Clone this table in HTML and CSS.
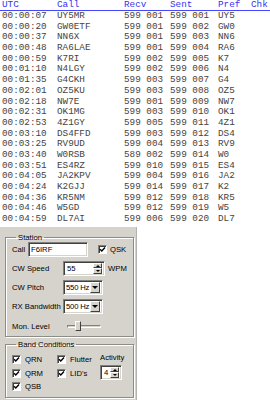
FILE: index.html
```html
<!DOCTYPE html>
<html>
<head>
<meta charset="utf-8">
<link rel="stylesheet" href="styles.css">
</head>
<body>
<div class="log">
  <div class="row head"><span>UTC</span><span>Call</span><span>Recv</span><span>Sent</span><span>Pref</span><span>Chk</span></div>
  <div class="row"><span>00:00:07</span><span>UY5MR</span><span>599 001</span><span>599 001</span><span>UY5</span><span></span></div>
  <div class="row"><span>00:00:20</span><span>GW0ETF</span><span>599 001</span><span>599 002</span><span>GW0</span><span></span></div>
  <div class="row"><span>00:00:37</span><span>NN6X</span><span>599 001</span><span>599 003</span><span>NN6</span><span></span></div>
  <div class="row"><span>00:00:48</span><span>RA6LAE</span><span>599 001</span><span>599 004</span><span>RA6</span><span></span></div>
  <div class="row"><span>00:00:59</span><span>K7RI</span><span>599 002</span><span>599 005</span><span>K7</span><span></span></div>
  <div class="row"><span>00:01:10</span><span>N4LGY</span><span>599 002</span><span>599 006</span><span>N4</span><span></span></div>
  <div class="row"><span>00:01:35</span><span>G4CKH</span><span>599 003</span><span>599 007</span><span>G4</span><span></span></div>
  <div class="row"><span>00:02:01</span><span>OZ5KU</span><span>599 003</span><span>599 008</span><span>OZ5</span><span></span></div>
  <div class="row"><span>00:02:18</span><span>NW7E</span><span>599 001</span><span>599 009</span><span>NW7</span><span></span></div>
  <div class="row"><span>00:02:31</span><span>OK1MG</span><span>599 003</span><span>599 010</span><span>OK1</span><span></span></div>
  <div class="row"><span>00:02:53</span><span>4Z1GY</span><span>599 005</span><span>599 011</span><span>4Z1</span><span></span></div>
  <div class="row"><span>00:03:10</span><span>DS4FFD</span><span>599 003</span><span>599 012</span><span>DS4</span><span></span></div>
  <div class="row"><span>00:03:25</span><span>RV9UD</span><span>599 004</span><span>599 013</span><span>RV9</span><span></span></div>
  <div class="row"><span>00:03:40</span><span>W0RSB</span><span>589 002</span><span>599 014</span><span>W0</span><span></span></div>
  <div class="row"><span>00:03:51</span><span>ES4RZ</span><span>599 010</span><span>599 015</span><span>ES4</span><span></span></div>
  <div class="row"><span>00:04:05</span><span>JA2KPV</span><span>599 004</span><span>599 016</span><span>JA2</span><span></span></div>
  <div class="row"><span>00:04:24</span><span>K2GJJ</span><span>599 014</span><span>599 017</span><span>K2</span><span></span></div>
  <div class="row"><span>00:04:36</span><span>KR5NM</span><span>599 012</span><span>599 018</span><span>KR5</span><span></span></div>
  <div class="row"><span>00:04:46</span><span>W5GD</span><span>599 012</span><span>599 019</span><span>W5</span><span></span></div>
  <div class="row"><span>00:04:59</span><span>DL7AI</span><span>599 006</span><span>599 020</span><span>DL7</span><span></span></div>
</div>

<div class="panel">
  <fieldset class="group station">
    <legend>Station</legend>
    <div class="frow">
      <span class="lbl lbl-call">Call</span>
      <span class="field field-call">F6IRF</span>
      <span class="check chk-qsk"><svg viewBox="0 0 7 7" width="7" height="7"><path d="M1 3.2 L2.8 5 L6 1.6" fill="none" stroke="#000" stroke-width="1.4"/></svg></span>
      <span class="lbl">QSK</span>
    </div>
    <div class="frow">
      <span class="lbl lbl-wide">CW Speed</span>
      <span class="field spin spin-speed"><span class="val">55</span><span class="sbtns"><span class="sb"><i class="up"></i></span><span class="sb"><i class="dn"></i></span></span></span>
      <span class="lbl suffix">WPM</span>
    </div>
    <div class="frow">
      <span class="lbl lbl-wide">CW Pitch</span>
      <span class="field dd"><span class="val">550 Hz</span><span class="ddbtn"><i class="dn"></i></span></span>
    </div>
    <div class="frow">
      <span class="lbl lbl-wide">RX Bandwidth</span>
      <span class="field dd"><span class="val">500 Hz</span><span class="ddbtn"><i class="dn"></i></span></span>
    </div>
    <div class="frow frow-mon">
      <span class="lbl lbl-mon">Mon. Level</span>
      <span class="slider"><span class="track"></span><span class="thumb"></span></span>
    </div>
  </fieldset>

  <fieldset class="group band">
    <legend>Band Conditions</legend>
    <div class="bcols">
      <div class="bcol bcol1">
        <div class="citem"><span class="check"><svg viewBox="0 0 7 7" width="7" height="7"><path d="M1 3.2 L2.8 5 L6 1.6" fill="none" stroke="#000" stroke-width="1.4"/></svg></span><span class="lbl">QRN</span></div>
        <div class="citem"><span class="check"><svg viewBox="0 0 7 7" width="7" height="7"><path d="M1 3.2 L2.8 5 L6 1.6" fill="none" stroke="#000" stroke-width="1.4"/></svg></span><span class="lbl">QRM</span></div>
        <div class="citem"><span class="check"><svg viewBox="0 0 7 7" width="7" height="7"><path d="M1 3.2 L2.8 5 L6 1.6" fill="none" stroke="#000" stroke-width="1.4"/></svg></span><span class="lbl">QSB</span></div>
      </div>
      <div class="bcol bcol2">
        <div class="citem"><span class="check"><svg viewBox="0 0 7 7" width="7" height="7"><path d="M1 3.2 L2.8 5 L6 1.6" fill="none" stroke="#000" stroke-width="1.4"/></svg></span><span class="lbl">Flutter</span></div>
        <div class="citem"><span class="check"><svg viewBox="0 0 7 7" width="7" height="7"><path d="M1 3.2 L2.8 5 L6 1.6" fill="none" stroke="#000" stroke-width="1.4"/></svg></span><span class="lbl">LID's</span></div>
      </div>
      <div class="bcol bcol3">
        <span class="lbl act-lbl">Activity</span>
        <span class="field spin spin-act"><span class="val">4</span><span class="sbtns"><span class="sb"><i class="up"></i></span><span class="sb"><i class="dn"></i></span></span></span>
      </div>
    </div>
  </fieldset>
</div>
</body>
</html>
```

FILE: styles.css
```css
* { box-sizing: border-box; }

html, body {
  margin: 0;
  padding: 0;
  background: #ffffff;
}

.log {
  width: 270px;
  font-family: "Liberation Mono", "Courier New", monospace;
  font-size: 9.3px;
  color: #444444;
}

.row {
  display: grid;
  grid-template-columns: 55px 67px 46px 48px 33px 1fr;
  padding-left: 2px;
  height: 10.7px;
  line-height: 10.7px;
  white-space: pre;
}

.row.head {
  height: 11px;
  line-height: 10px;
  color: #3434f0;
  border-bottom: 1px solid #4646ff;
}

.panel {
  margin-top: 2px;
  width: 137px;
  height: 173px;
  background: #d6d3cd;
  border-right: 1px solid #b4b2ad;
  padding: 6px 0 0 5px;
  font-family: "Liberation Sans", Arial, sans-serif;
  font-size: 7.7px;
  color: #000;
}

.group {
  margin: 0;
  width: 129px;
  min-inline-size: 0;
  border: 1px solid #8e8c87;
  box-shadow: 1px 1px 0 #ffffff, inset 1px 1px 0 #ffffff;
  padding: 0 4px 1px 6px;
}

.group legend {
  margin-left: 4px;
  padding: 0 2px;
  line-height: 9px;
  font-size: 7.7px;
}

.station {
  display: flex;
  flex-direction: column;
  gap: 4px;
}

.frow {
  display: flex;
  align-items: center;
  height: 15px;
}

.frow-mon {
  height: 17px;
}

.lbl {
  white-space: nowrap;
  line-height: 9px;
}

.lbl-call { width: 16px; }
.lbl-wide { width: 51px; }
.lbl-mon { width: 55px; }
.suffix { margin-left: 3px; }

.field {
  display: flex;
  align-items: center;
  height: 15px;
  background: #ffffff;
  border: 1px solid;
  border-color: #808080 #ffffff #ffffff #808080;
  box-shadow: inset 1px 1px 0 #404040, inset -1px -1px 0 #d6d3cd;
  padding: 1px 1px 1px 2px;
  line-height: 9px;
  white-space: nowrap;
}

.field-call {
  width: 60px;
}

.field .val {
  flex: 1;
  padding-left: 1px;
}

.dd .val {
  padding-left: 0;
  letter-spacing: -0.2px;
}

.spin-speed { width: 42px; }
.spin-act { width: 22px; }

.dd { width: 40px; }

.sbtns {
  display: flex;
  flex-direction: column;
  width: 9px;
  height: 11px;
  margin-right: 1px;
}

.sb {
  flex: 1;
  display: flex;
  align-items: center;
  justify-content: center;
  background: #d6d3cd;
  border: 1px solid;
  border-color: #ffffff #404040 #404040 #ffffff;
}

.ddbtn {
  display: flex;
  align-items: center;
  justify-content: center;
  width: 10px;
  height: 11px;
  margin-right: 1px;
  background: #d6d3cd;
  border: 1px solid;
  border-color: #ffffff #404040 #404040 #ffffff;
}

.up, .dn {
  display: block;
  width: 0;
  height: 0;
  border-left: 2px solid transparent;
  border-right: 2px solid transparent;
}
.up { border-bottom: 2px solid #000; }
.dn { border-top: 2px solid #000; }
.ddbtn .dn {
  border-left-width: 3px;
  border-right-width: 3px;
  border-top-width: 3px;
}

.check {
  display: flex;
  align-items: center;
  justify-content: center;
  width: 9px;
  height: 9px;
  flex: none;
  background: #ffffff;
  border: 1px solid;
  border-color: #808080 #ffffff #ffffff #808080;
  box-shadow: inset 1px 1px 0 #404040;
}

.check svg { display: block; }

.chk-qsk {
  margin-left: 10px;
  margin-right: 3px;
}

.slider {
  display: flex;
  align-items: center;
  width: 34px;
  height: 12px;
}

.track {
  display: block;
  width: 34px;
  height: 3px;
  border: 1px solid;
  border-color: #808080 #ffffff #ffffff #808080;
  background: #d6d3cd;
}

.thumb {
  display: block;
  width: 6px;
  height: 10px;
  margin-left: -26px;
  background: #d6d3cd;
  border: 1px solid;
  border-color: #ffffff #404040 #404040 #ffffff;
}

.band {
  margin-top: 3px;
  padding: 4px 4px 4px 6px;
}

.bcols {
  display: flex;
}

.bcol {
  display: flex;
  flex-direction: column;
}

.bcol1 { width: 45px; }
.bcol2 { width: 43px; }

.citem {
  display: flex;
  align-items: center;
  gap: 4px;
  height: 13.5px;
}

.act-lbl {
  height: 9px;
  margin-bottom: 3px;
}
```
